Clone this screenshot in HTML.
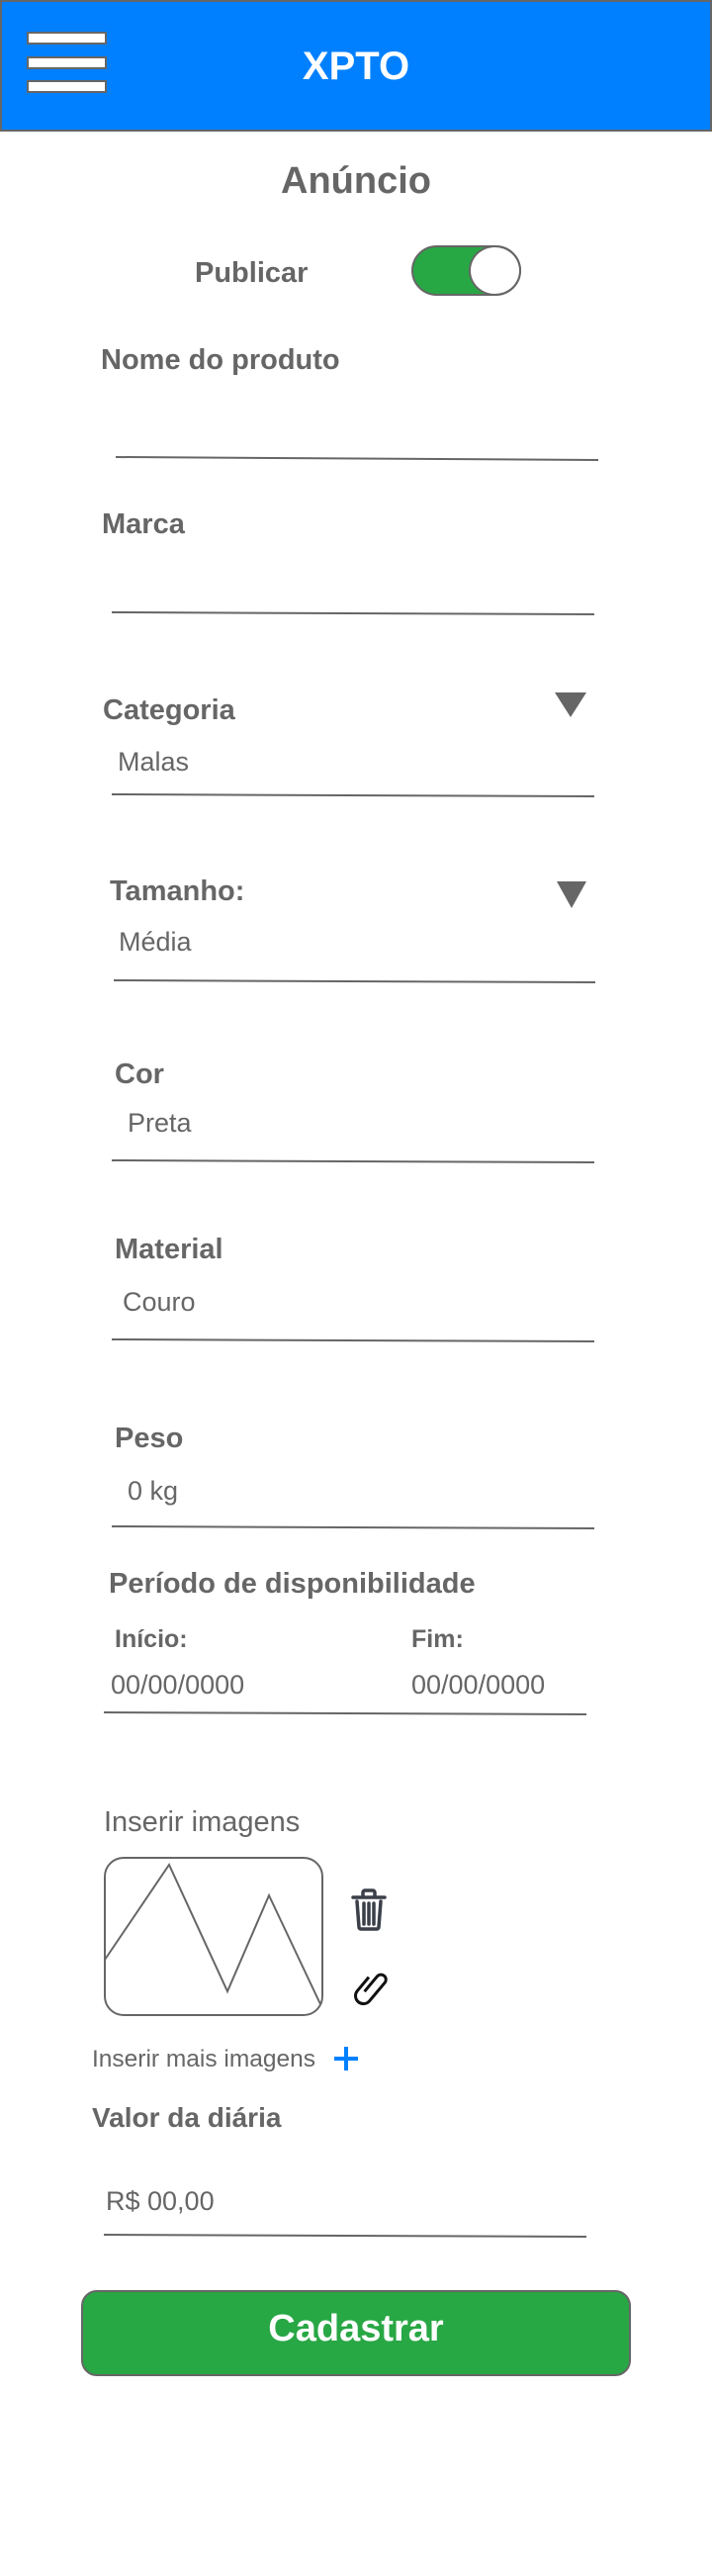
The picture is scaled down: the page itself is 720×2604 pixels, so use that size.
<!DOCTYPE html>
<html><head><meta charset="utf-8">
<style>
html,body{margin:0;padding:0;background:#fff;}
body{width:720px;height:2604px;position:relative;overflow:hidden;font-family:"Liberation Sans",sans-serif;color:#666;}
.t{position:absolute;line-height:1;white-space:nowrap;}
.b{font-weight:bold;font-size:29px;}
.r{font-size:27px;}
.bar{position:absolute;left:27px;width:77px;height:9px;background:#fff;border:2px solid #666;}
</style></head>
<body>
<div style="position:absolute;left:0;top:0;width:716px;height:129px;background:#0080FF;border:2px solid #666;"></div>
<div class="bar" style="top:32px"></div>
<div class="bar" style="top:57px"></div>
<div class="bar" style="top:81px"></div>
<div class="t" style="left:0;width:720px;text-align:center;top:47px;font-size:40px;font-weight:bold;color:#fff;">XPTO</div>

<div class="t" style="left:0;width:720px;text-align:center;top:164px;font-size:38px;font-weight:bold;">Anúncio</div>
<div class="t b" style="left:197px;top:262px;">Publicar</div>
<div style="position:absolute;left:416px;top:248px;width:107px;height:47px;border:2px solid #666;border-radius:26px;background:#28A745;"></div>
<div style="position:absolute;left:474px;top:248px;width:49px;height:47px;border:2px solid #666;border-radius:50%;background:#fff;"></div>

<div class="t b" style="left:102px;top:350px;">Nome do produto</div>
<div class="t b" style="left:103px;top:516px;">Marca</div>
<div class="t b" style="left:104px;top:704px;">Categoria</div>
<div class="t r" style="left:119px;top:757px;">Malas</div>
<div class="t b" style="left:111px;top:887px;">Tamanho:</div>
<div class="t r" style="left:120px;top:939px;">Média</div>
<div class="t b" style="left:116px;top:1072px;">Cor</div>
<div class="t r" style="left:129px;top:1122px;">Preta</div>
<div class="t b" style="left:116px;top:1249px;">Material</div>
<div class="t r" style="left:124px;top:1303px;">Couro</div>
<div class="t b" style="left:116px;top:1440px;">Peso</div>
<div class="t r" style="left:129px;top:1494px;">0 kg</div>
<div class="t b" style="left:110px;top:1587px;">Período de disponibilidade</div>
<div class="t" style="left:116px;top:1645px;font-size:25px;font-weight:bold;">Início:</div>
<div class="t" style="left:416px;top:1645px;font-size:25px;font-weight:bold;">Fim:</div>
<div class="t r" style="left:112px;top:1690px;">00/00/0000</div>
<div class="t r" style="left:416px;top:1690px;">00/00/0000</div>

<div class="t" style="left:105px;top:1828px;font-size:29px;">Inserir imagens</div>
<div style="position:absolute;left:105px;top:1877px;width:218px;height:157px;border:2px solid #666;border-radius:20px;"></div>
<div class="t" style="left:93px;top:2070px;font-size:24.5px;">Inserir mais imagens</div>
<div class="t" style="left:93px;top:2127px;font-size:28px;font-weight:bold;">Valor da diária</div>
<div class="t r" style="left:107px;top:2212px;">R$ 00,00</div>

<div style="position:absolute;left:82px;top:2315px;width:552px;height:83px;background:#28A745;border:2px solid #666;border-radius:16px;"></div>
<div class="t" style="left:82px;width:556px;text-align:center;top:2335px;font-size:38px;font-weight:bold;color:#fff;">Cadastrar</div>

<svg width="720" height="2604" style="position:absolute;left:0;top:0" xmlns="http://www.w3.org/2000/svg">
<g stroke="#666" stroke-width="2" fill="none">
<line x1="117" y1="462" x2="605" y2="465"/>
<line x1="113" y1="619" x2="601" y2="621"/>
<line x1="113" y1="803" x2="601" y2="805"/>
<line x1="115" y1="991" x2="602" y2="993"/>
<line x1="113" y1="1173" x2="601" y2="1175"/>
<line x1="113" y1="1354" x2="601" y2="1356"/>
<line x1="113" y1="1543" x2="601" y2="1545"/>
<line x1="105" y1="1731" x2="593" y2="1733"/>
<line x1="105" y1="2259" x2="593" y2="2261"/>
<polyline points="106,1981 171,1885 230,2013 272,1916 324,2026"/>
</g>
<polygon points="561,700 593,700 577,725" fill="#666"/>
<polygon points="563,891 593,891 578,918" fill="#666"/>
<g stroke="#3a3f48" stroke-width="3.5" fill="none" stroke-linecap="round">
<line x1="357" y1="1918" x2="389" y2="1918"/>
<path d="M367 1917 v-4 a2 2 0 0 1 2 -2 h8 a2 2 0 0 1 2 2 v4"/>
<path d="M361 1922 l2 26 a2 2 0 0 0 2 2 h16 a2 2 0 0 0 2 -2 l2 -26"/>
<line x1="368" y1="1924" x2="368" y2="1945"/>
<line x1="373" y1="1924" x2="373" y2="1945"/>
<line x1="378" y1="1924" x2="378" y2="1945"/>
</g>
<g transform="translate(376,2009) rotate(40)" stroke="#111" stroke-width="3" fill="none">
<path d="M-3 8 V-12 a5 5 0 0 1 10 0 V12 a8 8 0 0 1 -16 0 V-6"/>
</g>
<g stroke="#0080FF" stroke-width="4">
<line x1="338" y1="2081" x2="362" y2="2081"/>
<line x1="350" y1="2069" x2="350" y2="2093"/>
</g>
</svg>
</body></html>
